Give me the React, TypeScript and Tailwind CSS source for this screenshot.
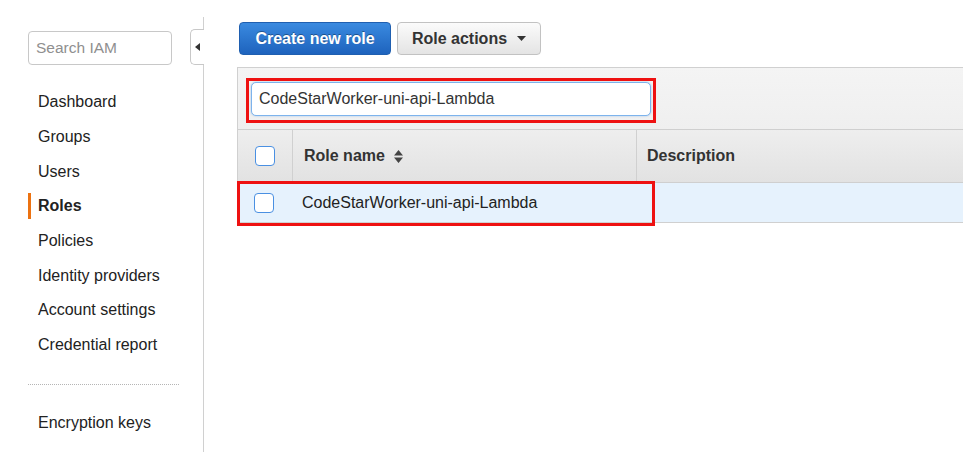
import { ReactNode } from 'react';

const NAV = [
  'Dashboard',
  'Groups',
  'Users',
  'Roles',
  'Policies',
  'Identity providers',
  'Account settings',
  'Credential report',
];

const FONT = "font-['Liberation_Sans',Arial,sans-serif]";

function Checkbox() {
  return (
    <div className="w-[20px] h-[20px] rounded-[4px] border-[1.5px] border-[#4a90e2] bg-white" />
  );
}

function RedBox({ className, children }: { className: string; children?: ReactNode }) {
  return <div className={`absolute border-[3px] border-[#ee1111] pointer-events-none ${className}`}>{children}</div>;
}

export default function App() {
  return (
    <div className={`w-[963px] h-[452px] bg-white flex overflow-hidden text-[16px] text-[#222] ${FONT}`}>
      {/* sidebar */}
      <div className="relative w-[204px] shrink-0 flex">
        <div className="w-[203px] pl-[28px] pt-[31px]">
          <div className="w-[144px] h-[34px] rounded-[4px] border border-[#c8c8c8] flex items-center px-[7px] text-[#8f8f8f] text-[15.5px]">
            Search IAM
          </div>
          <div className="mt-[20px]">
            {NAV.map((n) => (
              <div key={n} className="relative h-[34.7px] flex items-center">
                {n === 'Roles' && (
                  <div className="absolute left-0 top-[4px] w-[3px] h-[26px] bg-[#ec7211]" />
                )}
                <span className={`pl-[10px] ${n === 'Roles' ? 'font-bold' : ''}`}>{n}</span>
              </div>
            ))}
          </div>
          <div className="mt-[21px] w-[151px] border-t border-dotted border-[#b5b5b5]" />
          <div className="mt-[26px] pl-[10px]">Encryption keys</div>
        </div>
        <div className="w-px mt-[17px] bg-[#d0d0d0]" />
        <div className="absolute left-[190px] top-[29px] w-[14px] h-[36px] bg-white border border-r-0 border-[#c8c8c8] rounded-l-[5px] flex items-center justify-center">
          <svg width="5" height="8" viewBox="0 0 5 8">
            <path d="M5 0 L0 4 L5 8 Z" fill="#333" />
          </svg>
        </div>
      </div>

      {/* main */}
      <div className="flex-1 pl-[33px] pt-[22px]">
        <div className="flex gap-[6px] pl-[2px]">
          <div className="h-[33px] w-[152px] rounded-[4px] border border-[#1f5fb0] bg-gradient-to-b from-[#3a8ae0] to-[#1e63bd] text-white font-bold flex items-center justify-center [text-shadow:0_-1px_0_rgba(0,0,0,0.35)]">
            Create new role
          </div>
          <div className="h-[33px] w-[144px] rounded-[4px] border border-[#c2c2c2] bg-gradient-to-b from-[#fbfbfb] to-[#e4e4e4] text-[#333] font-bold flex items-center justify-center gap-[10px]">
            Role actions
            <svg width="9" height="5" viewBox="0 0 9 5">
              <path d="M0 0 L9 0 L4.5 5 Z" fill="#333" />
            </svg>
          </div>
        </div>

        <div className="relative mt-[12px] border-t border-l border-[#d0d0d0]">
          <div className="h-[62px] bg-gradient-to-b from-[#f4f4f4] to-[#efefef] border-b border-[#cfcfcf] flex items-center pl-[13px]">
            <div className="w-[400px] h-[34px] rounded-[5px] border border-[#7db3ec] bg-white flex items-center px-[7px] text-[#333] shadow-[0_0_2px_rgba(74,144,226,0.5)]">
              CodeStarWorker-uni-api-Lambda
            </div>
          </div>
          <div className="h-[53px] bg-gradient-to-b from-[#eeeeee] to-[#e2e2e2] border-b border-[#cfcfcf] flex font-bold text-[#333]">
            <div className="w-[55px] border-r border-[#d0d0d0] flex items-center pl-[17px]">
              <Checkbox />
            </div>
            <div className="w-[344px] border-r border-[#d0d0d0] flex items-center pl-[11px] gap-[9px]">
              Role name
              <svg width="9" height="13" viewBox="0 0 9 13">
                <path d="M0 5.5 L4.5 0 L9 5.5 Z M0 7.5 L9 7.5 L4.5 13 Z" fill="#444" />
              </svg>
            </div>
            <div className="flex-1 flex items-center pl-[10px]">Description</div>
          </div>
          <div className="h-[40px] bg-[#e6f2fd] border-b border-[#d0d0d0] flex items-center text-[#222]">
            <div className="w-[64px] pl-[16px]">
              <Checkbox />
            </div>
            CodeStarWorker-uni-api-Lambda
          </div>

          <RedBox className="left-[8px] top-[10px] w-[410px] h-[45px]" />
          <RedBox className="left-[-1px] top-[113px] w-[418px] h-[45px]" />
        </div>
      </div>
    </div>
  );
}
